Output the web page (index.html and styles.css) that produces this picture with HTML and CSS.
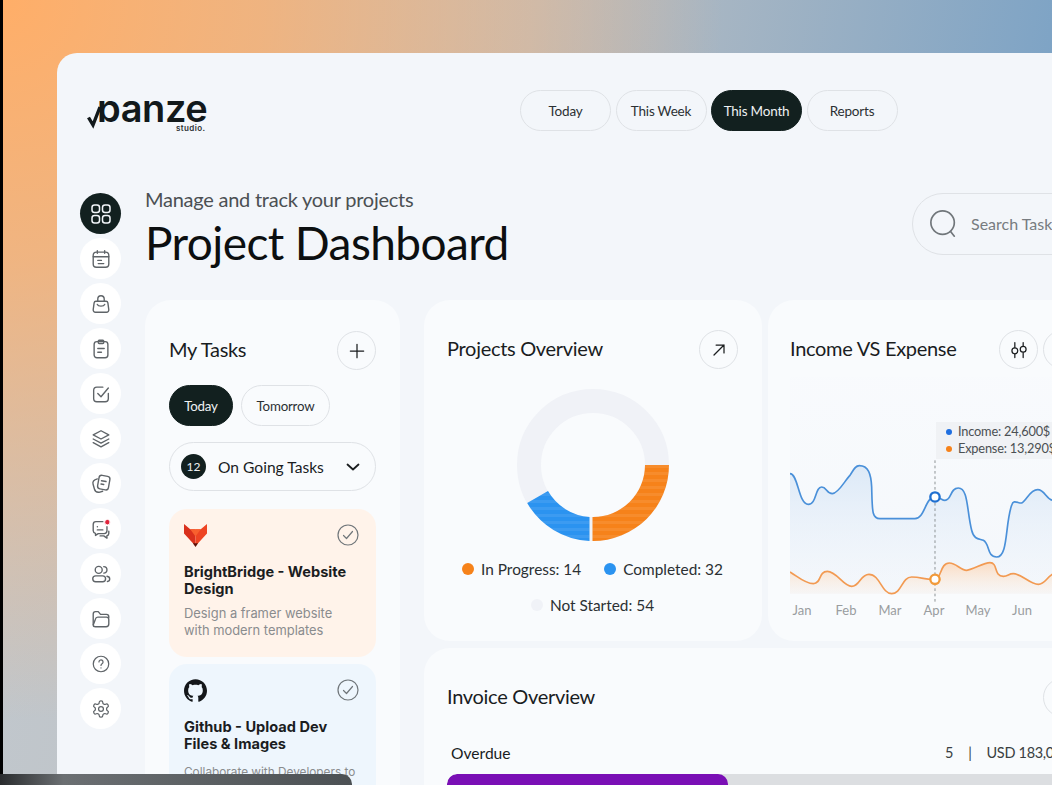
FILE: index.html
```html
<!DOCTYPE html>
<html lang="en">
<head>
    <meta charset="UTF-8">
    <title>Panze Studio - Project Dashboard</title>
    <link rel="stylesheet" href="styles.css">
</head>
<body>
    <div class="backdrop">
        <div class="panel">
            <header class="topbar">
                <div class="logo">
                    <svg class="logo-tick" viewBox="0 0 16 26"><path d="M1.5 13.5L6 21 13 3"/></svg>
                    <span class="logo-name">panze</span>
                    <span class="logo-sub">studio.</span>
                </div>
                <nav class="tabs">
                    <a class="pill tab">Today</a>
                    <a class="pill tab">This Week</a>
                    <a class="pill tab active">This Month</a>
                    <a class="pill tab">Reports</a>
                </nav>
            </header>

            <div class="workspace">
                <aside class="sidebar">
                    <a class="side-btn active"><svg class="ico" viewBox="0 0 24 24"><rect x="3" y="3" width="7.5" height="7.5" rx="2.5"/><rect x="13.5" y="3" width="7.5" height="7.5" rx="2.5"/><rect x="3" y="13.5" width="7.5" height="7.5" rx="2.5"/><rect x="13.5" y="13.5" width="7.5" height="7.5" rx="2.5"/></svg></a>
                    <a class="side-btn"><svg class="ico" viewBox="0 0 24 24"><rect x="3.5" y="4.5" width="17" height="16.5" rx="3.5"/><path d="M3.5 9.5h17M8 2.8v3M16 2.8v3M8.5 13.5h4M9 17h6"/></svg></a>
                    <a class="side-btn"><svg class="ico" viewBox="0 0 24 24"><path d="M8.5 9V6.500a3.5 3.5 0 0 1 7 0V9"/><path d="M6.5 9h11a2 2 0 0 1 2 1.700l1 7.500a2.5 2.5 0 0 1-2.5 2.800H6a2.5 2.5 0 0 1-2.5-2.800l1-7.500A2 2 0 0 1 6.5 9z"/><path d="M8 12.5c1 2.5 7 2.5 8 0"/></svg></a>
                    <a class="side-btn"><svg class="ico" viewBox="0 0 24 24"><rect x="4.5" y="4" width="15" height="17.5" rx="3"/><rect x="9" y="2.5" width="6" height="3.5" rx="1"/><path d="M8.5 11.5h7M8.5 15.5h4"/></svg></a>
                    <a class="side-btn"><svg class="ico" viewBox="0 0 24 24"><path d="M20 11.5V17a3.5 3.5 0 0 1-3.5 3.5H7.5A3.5 3.5 0 0 1 4 17V8a3.5 3.5 0 0 1 3.5-3.5H14"/><path d="M8.5 11.5l3.5 3.5L20 5.5"/></svg></a>
                    <a class="side-btn"><svg class="ico" viewBox="0 0 24 24"><path d="M12 3l8.5 4.500L12 12 3.500 7.500z"/><path d="M3.5 12l8.5 4.500 8.500-4.500"/><path d="M3.5 16l8.5 4.500 8.500-4.500"/></svg></a>
                    <a class="side-btn"><svg class="ico" viewBox="0 0 24 24"><rect x="9" y="3" width="12" height="15" rx="3" transform="rotate(10 15 10.5)"/><path d="M12.5 8.5l5 .8M12 12l3 .5"/><path d="M8 6.5C4.5 7.5 2.5 9 3.3 12l1.500 5.500c.8 2.800 3.200 4 6 3.300l3-.9"/></svg></a>
                    <a class="side-btn"><svg class="ico" viewBox="0 0 24 24"><path d="M18.5 9.5V14a3 3 0 0 1-3 3H9l-3 2v-2.200A3 3 0 0 1 3.5 14V7a3 3 0 0 1 3-3H14"/><path d="M8 9.5h.1M8 13h6"/><path d="M20.5 14.5v2.500a2.5 2.5 0 0 1-2 2.400V22l-3.500-2.500h-4"/><circle class="ico-dot" cx="19" cy="4.5" r="3"/></svg></a>
                    <a class="side-btn"><svg class="ico" viewBox="0 0 24 24"><circle cx="9.5" cy="7.5" r="3.8"/><rect x="3" y="14" width="14" height="6.5" rx="3.25"/><path d="M15 4a3.5 3.5 0 0 1 0 7M18.5 14.5c2 .3 3 1.500 3 3s-1 2.500-2.500 2.700"/></svg></a>
                    <a class="side-btn"><svg class="ico" viewBox="0 0 24 24"><path d="M3.5 18V6.500A2.5 2.5 0 0 1 6 4h3l2.500 3H18a2.5 2.5 0 0 1 2.500 2.500v.8"/><path d="M3.5 18.5c0 1 1 2 2.500 2h11.500a3 3 0 0 0 3-3v-5a2.5 2.5 0 0 0-2.500-2.500H8.500c-1.500 0-2.300 1-2.600 2.200z"/></svg></a>
                    <a class="side-btn"><svg class="ico" viewBox="-1.5 -1.5 27 27"><circle cx="12" cy="12" r="9.5"/><path d="M9.5 9.5a2.5 2.5 0 1 1 3.800 2.100c-.9.600-1.300 1.100-1.300 2.200M12 16.800v.1"/></svg></a>
                    <a class="side-btn"><svg class="ico" viewBox="-1.5 -1.5 27 27"><path d="M12.22 2h-.44a2 2 0 0 0-2 2v.18a2 2 0 0 1-1 1.730l-.43.25a2 2 0 0 1-2 0l-.15-.08a2 2 0 0 0-2.730.73l-.22.38a2 2 0 0 0 .73 2.730l.15.1a2 2 0 0 1 1 1.720v.51a2 2 0 0 1-1 1.740l-.15.09a2 2 0 0 0-.73 2.730l.22.38a2 2 0 0 0 2.730.73l.15-.08a2 2 0 0 1 2 0l.43.25a2 2 0 0 1 1 1.730V20a2 2 0 0 0 2 2h.44a2 2 0 0 0 2-2v-.18a2 2 0 0 1 1-1.730l.43-.25a2 2 0 0 1 2 0l.15.08a2 2 0 0 0 2.730-.73l.22-.39a2 2 0 0 0-.73-2.730l-.15-.08a2 2 0 0 1-1-1.740v-.5a2 2 0 0 1 1-1.740l.15-.09a2 2 0 0 0 .73-2.730l-.22-.38a2 2 0 0 0-2.730-.73l-.15.08a2 2 0 0 1-2 0l-.43-.25a2 2 0 0 1-1-1.730V4a2 2 0 0 0-2-2z"/><circle cx="12" cy="12" r="3"/></svg></a>
                </aside>

                <main class="main">
                    <div class="heading">
                        <div class="heading-text">
                            <p class="subtitle">Manage and track your projects</p>
                            <h1 class="title">Project Dashboard</h1>
                        </div>
                        <div class="search">
                            <svg class="search-ico" viewBox="0 0 32 32"><circle cx="14.5" cy="14.5" r="12.5"/><path d="M23 24l4 5"/></svg>
                            <span>Search Tasks</span>
                        </div>
                    </div>

                    <div class="board">
                        <section class="card tasks">
                            <div class="card-head">
                                <h2>My Tasks</h2>
                                <a class="round-btn"><svg class="ico dark" viewBox="0 0 24 24"><path d="M12 4v16M4 12h16"/></svg></a>
                            </div>
                            <div class="task-tabs">
                                <a class="pill small active">Today</a>
                                <a class="pill small">Tomorrow</a>
                            </div>
                            <div class="dropdown">
                                <span class="count">12</span>
                                <span class="dropdown-label">On Going Tasks</span>
                                <svg class="chevron" viewBox="0 0 14 8"><path d="M1.5 1.5L7 6.5l5.5-5"/></svg>
                            </div>
                            <article class="task task-orange">
                                <div class="task-top">
                                    <svg class="task-logo" viewBox="0 0 22 22">
                                        <polygon fill="#d9301c" points="0,0 6,5 11,5 11,21 0,9"/>
                                        <polygon fill="#ee4423" points="22,0 16,5 11,5 11,21 22,9"/>
                                        <polygon fill="#f8602e" points="6,5 16,5 11,12"/>
                                        <polygon fill="#5c1208" points="8.5,18.5 13.5,18.5 11,22"/>
                                    </svg>
                                    <svg class="task-check" viewBox="0 0 22 22"><circle cx="11" cy="11" r="10"/><path d="M6.5 11.5l3 3 6-7"/></svg>
                                </div>
                                <h3>BrightBridge - Website Design</h3>
                                <p>Design a framer website with modern templates</p>
                            </article>
                            <article class="task task-blue">
                                <div class="task-top">
                                    <svg class="task-logo" viewBox="0 0 24 24"><path fill="#14171a" d="M12 .297c-6.630 0-12 5.373-12 12 0 5.303 3.438 9.800 8.205 11.385.6.113.82-.258.82-.577 0-.285-.01-1.040-.015-2.040-3.338.724-4.042-1.610-4.042-1.610C4.422 18.070 3.633 17.700 3.633 17.700c-1.087-.744.084-.729.084-.729 1.205.084 1.838 1.236 1.838 1.236 1.070 1.835 2.809 1.305 3.495.998.108-.776.417-1.305.76-1.605-2.665-.3-5.466-1.332-5.466-5.930 0-1.310.465-2.380 1.235-3.220-.135-.303-.54-1.523.105-3.176 0 0 1.005-.322 3.300 1.230.96-.267 1.980-.399 3-.405 1.020.006 2.040.138 3 .405 2.280-1.552 3.285-1.230 3.285-1.230.645 1.653.24 2.873.12 3.176.765.84 1.230 1.910 1.230 3.220 0 4.610-2.805 5.625-5.475 5.920.42.36.81 1.096.81 2.220 0 1.606-.015 2.896-.015 3.286 0 .315.21.69.825.57C20.565 22.092 24 17.592 24 12.297c0-6.627-5.373-12-12-12"/></svg>
                                    <svg class="task-check" viewBox="0 0 22 22"><circle cx="11" cy="11" r="10"/><path d="M6.5 11.5l3 3 6-7"/></svg>
                                </div>
                                <h3>Github - Upload Dev Files &amp; Images</h3>
                                <p>Collaborate with Developers to manage the files</p>
                            </article>
                        </section>

                        <div class="overview">
                            <section class="card projects">
                                <div class="card-head">
                                    <h2>Projects Overview</h2>
                                    <a class="round-btn"><svg class="ico dark" viewBox="0 0 24 24"><path d="M6 18L18 6M8.5 6H18v9.5"/></svg></a>
                                </div>
                                <svg class="donut" viewBox="-77 -77 154 154">
                                    <defs>
                                        <pattern id="stripes" width="10" height="7" patternUnits="userSpaceOnUse">
                                            <rect width="10" height="3" fill="#fff" opacity="0.08"/>
                                        </pattern>
                                    </defs>
                                    <circle class="donut-rest" r="64"/>
                                    <path fill="#f6821a" d="M76 0A76 76 0 0 1-.5 76V52A52 52 0 0 0 52 0z"/>
                                    <path fill="#2b93f0" d="M-3.5 76A76 76 0 0 1-65.8 38L-45 26A52 52 0 0 0-3.5 52z"/>
                                    <path fill="url(#stripes)" d="M76 0A76 76 0 0 1-.5 76V52A52 52 0 0 0 52 0z"/>
                                    <path fill="url(#stripes)" d="M-3.5 76A76 76 0 0 1-65.8 38L-45 26A52 52 0 0 0-3.5 52z"/>
                                </svg>
                                <ul class="legend">
                                    <li><i class="dot dot-orange"></i>In Progress: 14</li>
                                    <li><i class="dot dot-blue"></i>Completed: 32</li>
                                    <li><i class="dot dot-grey"></i>Not Started: 54</li>
                                </ul>
                            </section>

                            <section class="card income">
                                <div class="card-head">
                                    <h2>Income VS Expense</h2>
                                    <div class="head-actions">
                                        <a class="round-btn"><svg class="ico dark" viewBox="0 0 24 24"><path d="M7 3v6M7 17v4M17 3v4M17 15v6"/><circle cx="7" cy="13" r="3.5"/><circle cx="17" cy="11" r="3.5"/></svg></a>
                                        <a class="round-btn"><svg class="ico dark" viewBox="0 0 24 24"><path d="M6 18L18 6M8.5 6H18v9.5"/></svg></a>
                                    </div>
                                </div>
                                <div class="chart">
                                    <svg class="chart-svg" viewBox="60 200 790 680">
                                        <defs>
                                            <linearGradient id="fade-band" x1="0" y1="0" x2="0" y2="1">
                                                <stop offset="0" stop-color="#f8fafd"/>
                                                <stop offset="1" stop-color="#f1f5fa"/>
                                            </linearGradient>
                                            <linearGradient id="fade-blue" x1="0" y1="0" x2="0" y2="1">
                                                <stop offset="0" stop-color="#dce9f7"/>
                                                <stop offset="1" stop-color="#f2f6fb" stop-opacity="0.3"/>
                                            </linearGradient>
                                            <linearGradient id="fade-orange" x1="0" y1="0" x2="0" y2="1">
                                                <stop offset="0" stop-color="#fbdcc2"/>
                                                <stop offset="1" stop-color="#fbf3ec" stop-opacity="0.4"/>
                                            </linearGradient>
                                        </defs>
                                        <rect x="60" y="200" width="790" height="650" fill="url(#fade-band)" opacity="0.6"/>
                                        <path fill="url(#fade-blue)" d="M60 490C85 490 85 582 115 582C140 582 135 530 155 530C170 530 170 550 187 550C205 550 225 510 240 495C250 480 255 466 268 466C295 466 303 490 305 530C307 600 305 625 330 625L435 625C465 625 465 560 495 560C510 560 515 570 525 570C545 570 540 533 565 533C595 533 590 600 605 660C612 690 630 685 640 690C660 700 650 740 680 740C715 740 705 640 725 585C730 565 745 580 755 578C770 570 780 538 803 538C825 538 830 570 850 570V850H60z"/>
                                        <path fill="url(#fade-orange)" d="M60 785C85 800 105 820 130 820C155 820 145 783 172 783C200 783 220 828 245 828C270 828 270 792 297 792C330 792 335 850 365 850C395 850 395 800 425 800C455 800 470 810 495 807C515 805 510 758 538 758C560 758 570 780 590 780C610 778 640 757 660 757C685 757 670 798 700 798C715 798 715 790 730 790C755 790 780 822 805 822C825 822 830 800 850 790V850H60z"/>
                                        <path class="line-blue" d="M60 490C85 490 85 582 115 582C140 582 135 530 155 530C170 530 170 550 187 550C205 550 225 510 240 495C250 480 255 466 268 466C295 466 303 490 305 530C307 600 305 625 330 625L435 625C465 625 465 560 495 560C510 560 515 570 525 570C545 570 540 533 565 533C595 533 590 600 605 660C612 690 630 685 640 690C660 700 650 740 680 740C715 740 705 640 725 585C730 565 745 580 755 578C770 570 780 538 803 538C825 538 830 570 850 570"/>
                                        <path class="line-orange" d="M60 785C85 800 105 820 130 820C155 820 145 783 172 783C200 783 220 828 245 828C270 828 270 792 297 792C330 792 335 850 365 850C395 850 395 800 425 800C455 800 470 810 495 807C515 805 510 758 538 758C560 758 570 780 590 780C610 778 640 757 660 757C685 757 670 798 700 798C715 798 715 790 730 790C755 790 780 822 805 822C825 822 830 800 850 790"/>
                                        <path class="marker-line" d="M495 450V880"/>
                                        <circle class="marker-blue" cx="495" cy="560" r="14"/>
                                        <circle class="marker-orange" cx="495" cy="807" r="14"/>
                                    </svg>
                                    <div class="chart-tip">
                                        <div><i class="tip-dot dot-blue2"></i>Income: 24,600$</div>
                                        <div><i class="tip-dot dot-orange"></i>Expense: 13,290$</div>
                                    </div>
                                    <div class="months">
                                        <span>Jan</span><span>Feb</span><span>Mar</span><span>Apr</span><span>May</span><span>Jun</span><span>Jul</span>
                                    </div>
                                </div>
                            </section>

                            <section class="card invoice">
                                <div class="card-head">
                                    <h2>Invoice Overview</h2>
                                    <a class="round-btn"><svg class="ico dark" viewBox="0 0 24 24"><path d="M6 18L18 6M8.5 6H18v9.5"/></svg></a>
                                </div>
                                <div class="invoice-row">
                                    <span>Overdue</span>
                                    <span class="invoice-nums"><b>5</b><b>|</b><b>USD 183,000</b></span>
                                </div>
                                <div class="bar"><div class="bar-fill"></div></div>
                            </section>
                        </div>
                    </div>
                </main>
            </div>
        </div>
    </div>
    <div class="video-bar"></div>
</body>
</html>
```

FILE: styles.css
```css
* {
    margin: 0;
    padding: 0;
    box-sizing: border-box;
}

html, body {
    width: 1052px;
    height: 785px;
    overflow: hidden;
}

body {
    position: relative;
    background: #000;
    font-family: 'Lato', 'Noto Sans', sans-serif;
    color: #1a1d1f;
}

a {
    display: flex;
    align-items: center;
    justify-content: center;
}

.backdrop {
    margin-left: 3px;
    height: 785px;
    padding: 53px 0 0 54px;
    overflow: hidden;
    background:
        radial-gradient(circle at 0 0, #ffae68 0, rgba(255,174,104,0.75) 260px, rgba(255,174,104,0) 720px),
        linear-gradient(100deg, #c2c9cf 0%, #bcbfc2 45%, #6f9dc6 100%);
}

.panel {
    width: 1140px;
    height: 900px;
    padding: 37px 0 0 23px;
    border-radius: 20px 0 0 0;
    background: #f3f6fa;
}

/* top bar */
.topbar {
    display: flex;
    height: 41px;
    margin-bottom: 57px;
}

.logo {
    position: relative;
    width: 440px;
    height: 41px;
}

.logo-tick {
    position: absolute;
    left: 7px;
    top: 14px;
    width: 16px;
    height: 26px;
    fill: none;
    stroke: #12191b;
    stroke-width: 3.4;
}

.logo-name {
    position: absolute;
    left: 17px;
    top: 3px;
    font-family: 'Inter', sans-serif;
    font-size: 38px;
    line-height: 30px;
    font-weight: 600;
    letter-spacing: -0.4px;
    color: #12191b;
    clip-path: inset(-6px 0 1px 0);
}

.logo-sub {
    position: absolute;
    left: 96px;
    top: 34px;
    font-family: 'Inter', sans-serif;
    font-size: 8px;
    line-height: 8px;
    font-weight: 600;
    letter-spacing: 0.4px;
    color: #2a3033;
}

.tabs {
    display: flex;
    gap: 4.5px;
}

.pill {
    border: 1.5px solid #dfe2e6;
    border-radius: 21px;
    font-size: 13.5px;
    letter-spacing: -0.2px;
    color: #2b3033;
}

.pill.active {
    background: #12201f;
    border-color: #12201f;
    color: #eef1f2;
}

.tab {
    width: 91px;
    height: 41px;
}

/* layout under the top bar */
.workspace {
    display: flex;
    align-items: flex-start;
    gap: 24px;
}

.sidebar {
    display: flex;
    flex-direction: column;
    gap: 4px;
    width: 41px;
    margin-top: 5px;
}

.side-btn {
    width: 41px;
    height: 41px;
    border-radius: 50%;
    background: #fff;
}

.side-btn.active {
    background: #12201f;
}

.side-btn.active .ico {
    width: 24px;
    height: 24px;
    stroke: #f2f5f9;
}

.ico {
    width: 20px;
    height: 20px;
    fill: none;
    stroke: #5f6468;
    stroke-width: 1.5;
    stroke-linecap: round;
    stroke-linejoin: round;
}

.side-btn .ico {
    width: 22px;
    height: 22px;
}

.ico.dark {
    stroke: #1a1d1f;
}

.ico-dot {
    fill: #e0243c;
    stroke: #fff;
    stroke-width: 1;
}

/* heading */
.heading {
    display: flex;
    align-items: flex-start;
    margin-bottom: 30px;
}

.heading-text {
    flex: 0 0 767px;
}

.subtitle {
    font-size: 20px;
    line-height: 22px;
    letter-spacing: -0.25px;
    margin-bottom: 6px;
    color: #4b5053;
}

.title {
    font-size: 46px;
    line-height: 54px;
    font-weight: 400;
    letter-spacing: -0.6px;
    color: #0c0f10;
}

.search {
    display: flex;
    align-items: center;
    gap: 12px;
    width: 240px;
    height: 62px;
    margin-top: 5px;
    padding-left: 16px;
    border: 1.5px solid #dfe2e6;
    border-radius: 31px;
    font-size: 16px;
    color: #777c80;
}

.search span {
    padding-bottom: 2px;
}

.search-ico {
    width: 30px;
    height: 30px;
    fill: none;
    stroke: #70767a;
    stroke-width: 1.8;
    stroke-linecap: round;
}

/* cards */
.board {
    display: flex;
    gap: 24px;
}

.card {
    border-radius: 26px;
    background: #f9fbfd;
}

.card h2 {
    padding-bottom: 3px;
    font-size: 20px;
    font-weight: 400;
    letter-spacing: -0.3px;
    color: #1a1d1f;
}

.card-head {
    display: flex;
    align-items: center;
    justify-content: space-between;
    height: 39px;
}

.round-btn {
    flex: none;
    width: 39px;
    height: 39px;
    border: 1.5px solid #dfe2e6;
    border-radius: 50%;
}

.head-actions {
    display: flex;
    gap: 5px;
}

/* my tasks */
.tasks {
    width: 255px;
    height: 600px;
    padding: 31px 24px 0;
}

.task-tabs {
    display: flex;
    gap: 8px;
    margin-top: 15px;
}

.pill.small {
    height: 41px;
    font-size: 13.3px;
}

.pill.small:first-child {
    width: 64px;
}

.pill.small:last-child {
    width: 89px;
}

.dropdown {
    display: flex;
    align-items: center;
    height: 49px;
    margin-top: 16px;
    padding: 0 15px 0 11px;
    border: 1.5px solid #dfe2e6;
    border-radius: 25px;
}

.count {
    display: flex;
    align-items: center;
    justify-content: center;
    width: 25px;
    height: 25px;
    margin-right: 12px;
    border-radius: 50%;
    background: #12201f;
    color: #eef1f2;
    font-size: 12px;
}

.dropdown-label {
    flex: 1;
    font-size: 15.6px;
}

.chevron {
    width: 14px;
    height: 8px;
    fill: none;
    stroke: #1a1d1f;
    stroke-width: 1.8;
    stroke-linecap: round;
    stroke-linejoin: round;
}

.task {
    height: 148px;
    margin-top: 18px;
    padding: 15px 17px 0 15px;
    border-radius: 18px;
    font-family: 'Inter', sans-serif;
}

.task-orange {
    background: #fff3ea;
}

.task-blue {
    height: 160px;
    margin-top: 7px;
    padding-top: 14px;
    background: #eef6fd;
}

.task-top {
    display: flex;
    align-items: center;
    justify-content: space-between;
    height: 22px;
    margin-bottom: 18px;
}

.task-blue .task-top {
    height: 24px;
    margin-bottom: 17px;
}

.task-logo {
    width: 23px;
    height: 23px;
}

.task-check {
    width: 22px;
    height: 22px;
    fill: none;
    stroke: #70767a;
    stroke-width: 1.2;
    stroke-linecap: round;
    stroke-linejoin: round;
}

.task h3 {
    font-size: 14.6px;
    line-height: 17px;
    font-weight: 700;
    color: #1b1d1f;
}

.task p {
    margin-top: 7px;
    font-size: 12.9px;
    line-height: 17px;
    color: #8a8c8e;
}

.task-blue p {
    margin-top: 11px;
    font-size: 11.8px;
}

/* right hand grid */
.overview {
    display: grid;
    grid-template-columns: 338px 336px;
    grid-template-rows: 341px auto;
    gap: 7px 6px;
}

.projects {
    padding: 30px 24px 0 23px;
}

.donut {
    display: block;
    width: 154px;
    height: 154px;
    margin: 19px auto 0;
}

.donut-rest {
    fill: none;
    stroke: #f0f2f7;
    stroke-width: 24;
}

.legend {
    display: flex;
    flex-wrap: wrap;
    justify-content: center;
    gap: 14px 23px;
    margin-top: 16px;
    list-style: none;
    font-size: 15.4px;
    line-height: 22px;
    color: #2b3033;
}

.legend li {
    display: flex;
    align-items: center;
    gap: 7px;
}

.dot {
    width: 12px;
    height: 12px;
    border-radius: 50%;
}

.dot-orange {
    background: #f6821a;
}

.dot-blue {
    background: #2b93f0;
}

.dot-blue2 {
    background: #1f6fe0;
}

.dot-grey {
    background: #f0f2f7;
}

/* income chart */
.income {
    padding: 30px 22px 0;
}

.chart {
    position: relative;
    margin-top: 8px;
}

.chart-svg {
    display: block;
    width: 263.33px;
    height: 226.67px;
}

.line-blue, .line-orange {
    fill: none;
    stroke-width: 5;
}

.line-blue {
    stroke: #4a90d9;
}

.line-orange {
    stroke: #f29a52;
}

.marker-line {
    stroke: #8e9396;
    stroke-width: 3;
    stroke-dasharray: 8 8;
}

.marker-blue, .marker-orange {
    fill: #fff;
    stroke-width: 7;
}

.marker-blue {
    stroke: #1f6fd0;
}

.marker-orange {
    stroke: #f29a3a;
}

.chart-tip {
    position: absolute;
    left: 146px;
    top: 45px;
    width: 210px;
    height: 37px;
    padding: 1px 0 0 10px;
    background: #f0f2f5;
    font-size: 12.8px;
    line-height: 17px;
    letter-spacing: -0.2px;
    color: #4b5053;
}

.chart-tip div {
    display: flex;
    align-items: center;
    gap: 6px;
}

.tip-dot {
    width: 6px;
    height: 6px;
    border-radius: 50%;
}

.months {
    display: flex;
    margin: -2px 0 0 -10px;
    font-size: 13px;
    line-height: 16px;
    color: #9a9da0;
}

.months span {
    flex: 0 0 44px;
    text-align: center;
}

/* invoice */
.invoice {
    grid-column: 1 / 3;
    height: 200px;
    padding: 30px 22px 0 23px;
}

.invoice-row {
    display: flex;
    justify-content: space-between;
    margin-top: 26px;
    padding: 0 0 0 4px;
    font-size: 15.6px;
    line-height: 20px;
}

.invoice-nums {
    display: flex;
    gap: 15px;
    width: 137px;
    font-size: 14.5px;
    letter-spacing: -0.3px;
    color: #3a3f42;
    white-space: nowrap;
}

.invoice-nums b {
    font-weight: 400;
}

.bar {
    height: 30px;
    margin-top: 11px;
    border-radius: 10px;
    background: #dcdee1;
    overflow: hidden;
}

.bar-fill {
    width: 281px;
    height: 30px;
    border-radius: 10px;
    background: #7a0fb5;
}

/* strip of the video player along the bottom */
.video-bar {
    position: absolute;
    left: 0;
    bottom: 0;
    width: 352px;
    height: 11px;
    border-radius: 0 10px 0 0;
    background: linear-gradient(90deg, #2a2c2e 0, #6b6f72 18%, #4c5154 100%);
}
```
